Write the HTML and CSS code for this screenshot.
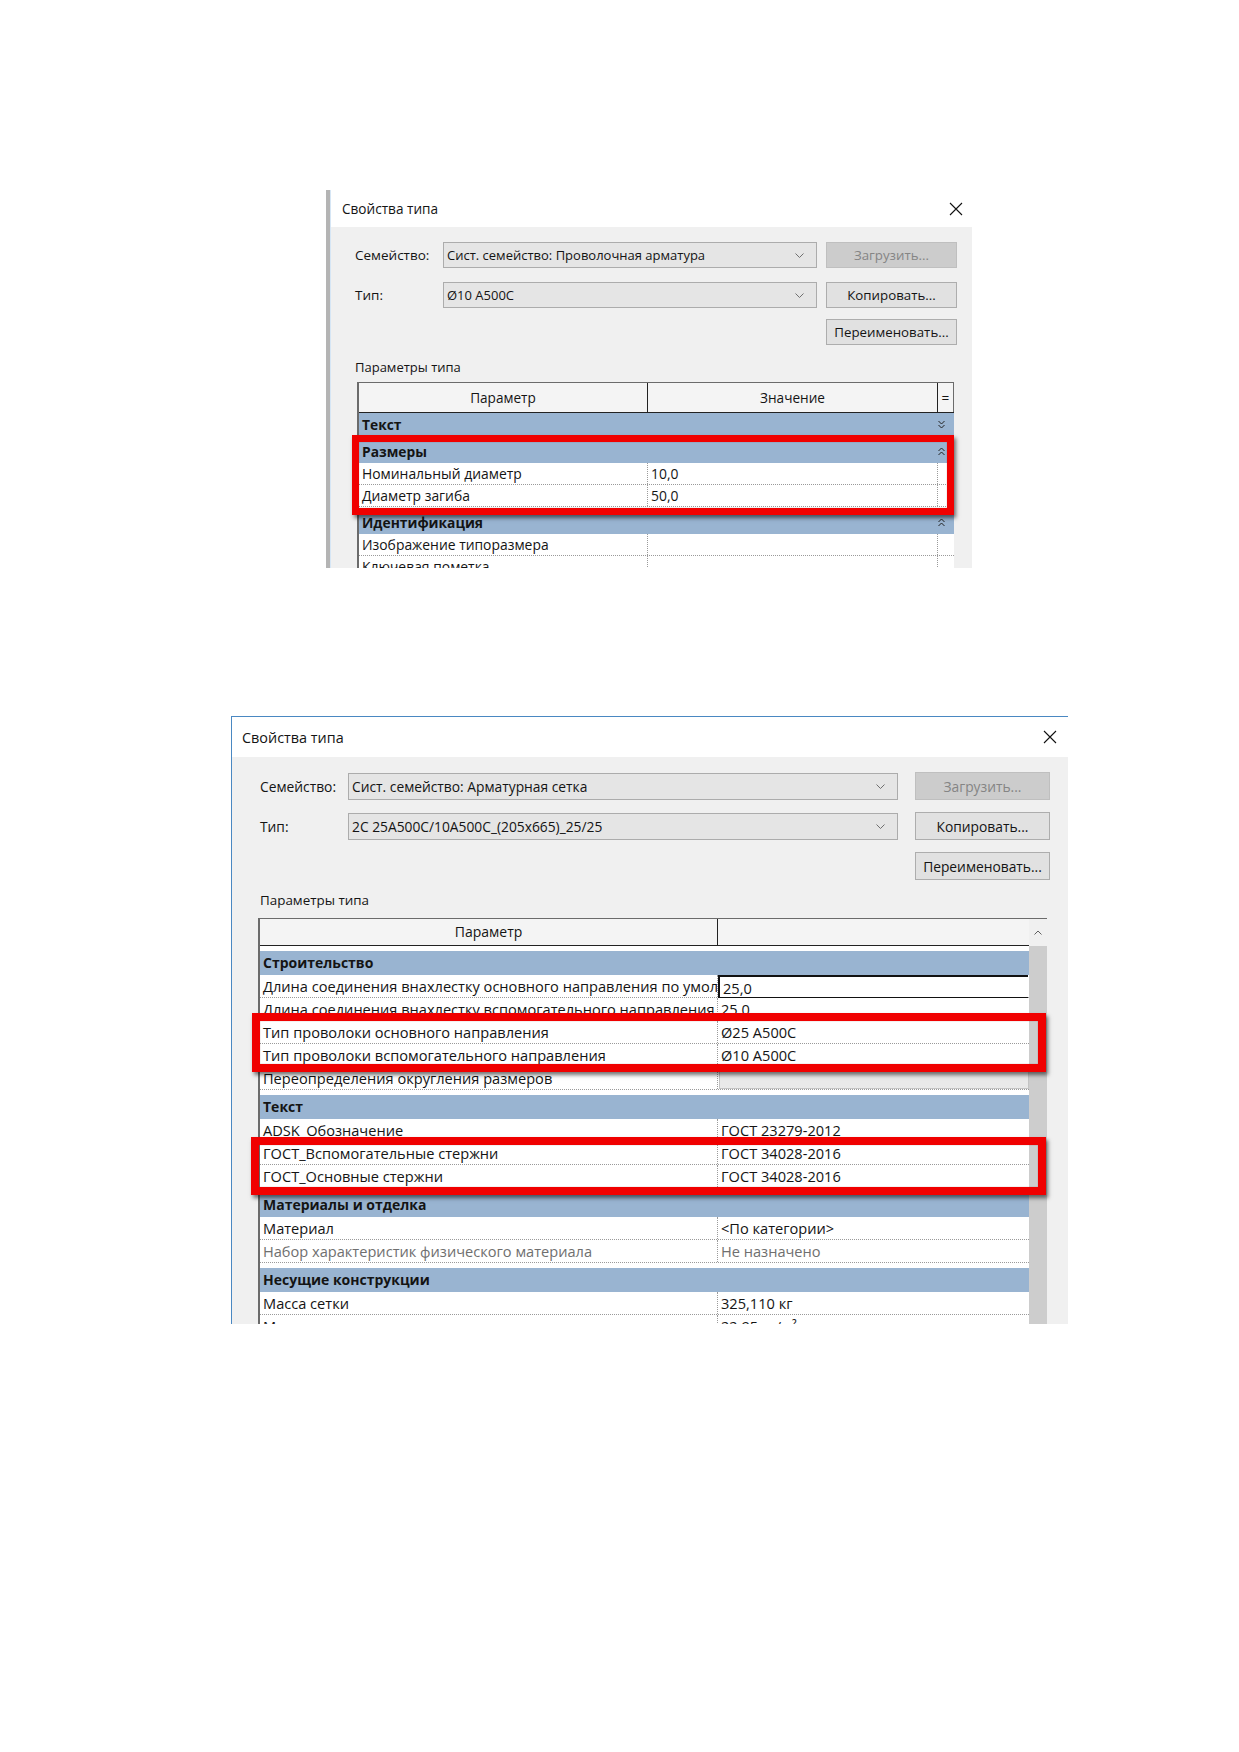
FILE: index.html
```html
<!DOCTYPE html>
<html lang="ru">
<head>
  <meta charset="UTF-8" />
  <title>Свойства типа</title>
  <link rel="stylesheet" href="styles.css">
</head>
<body>

  <!-- Окно 1: проволочная арматура -->
  <div class="dialog d1">
    <div class="window">
      <div class="titlebar">
        <span class="title">Свойства типа</span>
        <svg class="close" width="14" height="14" viewBox="0 0 14 14"><path d="M1 1L13 13M13 1L1 13" stroke="#111" stroke-width="1.1" fill="none"/></svg>
      </div>
      <div class="content">
        <div class="type-form">
          <span class="lbl">Семейство:</span>
          <div class="combo"><span>Сист. семейство: Проволочная арматура</span><svg width="9" height="5" viewBox="0 0 9 5"><path d="M0.5 0.5L4.5 4.5L8.5 0.5" stroke="#6f6f6f" fill="none"/></svg></div>
          <button class="btn disabled">Загрузить...</button>
          <span class="lbl">Тип:</span>
          <div class="combo"><span>Ø10 A500C</span><svg width="9" height="5" viewBox="0 0 9 5"><path d="M0.5 0.5L4.5 4.5L8.5 0.5" stroke="#6f6f6f" fill="none"/></svg></div>
          <button class="btn">Копировать...</button>
          <button class="btn col3">Переименовать...</button>
        </div>
        <div class="section-lbl">Параметры типа</div>

        <div class="grid">
          <div class="props">
            <div class="head">
              <div class="c-name">Параметр</div>
              <div class="c-val">Значение</div>
              <div class="c-eq">=</div>
            </div>
            <div class="group first">Текст
              <svg class="fold" width="7" height="9" viewBox="0 0 7 9"><path d="M0.5 1L3.5 4L6.5 1M0.5 5L3.5 8L6.5 5" stroke="#222" fill="none"/></svg>
            </div>
            <div class="group">Размеры
              <svg class="fold" width="7" height="9" viewBox="0 0 7 9"><path d="M0.5 4L3.5 1L6.5 4M0.5 8L3.5 5L6.5 8" stroke="#222" fill="none"/></svg>
            </div>
            <div class="row"><div class="c-name">Номинальный диаметр</div><div class="c-val">10,0</div><div class="c-eq"></div></div>
            <div class="row"><div class="c-name">Диаметр загиба</div><div class="c-val">50,0</div><div class="c-eq"></div></div>
            <div class="group">Идентификация
              <svg class="fold" width="7" height="9" viewBox="0 0 7 9"><path d="M0.5 4L3.5 1L6.5 4M0.5 8L3.5 5L6.5 8" stroke="#222" fill="none"/></svg>
            </div>
            <div class="row"><div class="c-name">Изображение типоразмера</div><div class="c-val"></div><div class="c-eq"></div></div>
            <div class="row"><div class="c-name">Ключевая пометка</div><div class="c-val"></div><div class="c-eq"></div></div>
          </div>
        </div>
      </div>
    </div>
    <div class="mark d1-mark"></div>
  </div>

  <!-- Окно 2: арматурная сетка -->
  <div class="dialog d2">
    <div class="window">
      <div class="titlebar">
        <span class="title">Свойства типа</span>
        <svg class="close" width="14" height="14" viewBox="0 0 14 14"><path d="M1 1L13 13M13 1L1 13" stroke="#111" stroke-width="1.1" fill="none"/></svg>
      </div>
      <div class="content">
        <div class="type-form">
          <span class="lbl">Семейство:</span>
          <div class="combo"><span>Сист. семейство: Арматурная сетка</span><svg width="9" height="5" viewBox="0 0 9 5"><path d="M0.5 0.5L4.5 4.5L8.5 0.5" stroke="#6f6f6f" fill="none"/></svg></div>
          <button class="btn disabled">Загрузить...</button>
          <span class="lbl">Тип:</span>
          <div class="combo"><span>2C 25A500C/10A500C_(205x665)_25/25</span><svg width="9" height="5" viewBox="0 0 9 5"><path d="M0.5 0.5L4.5 4.5L8.5 0.5" stroke="#6f6f6f" fill="none"/></svg></div>
          <button class="btn">Копировать...</button>
          <button class="btn col3">Переименовать...</button>
        </div>
        <div class="section-lbl">Параметры типа</div>

        <div class="grid">
          <div class="props">
            <div class="head">
              <div class="c-name">Параметр</div>
              <div class="c-val"></div>
            </div>
            <div class="group">Строительство</div>
            <div class="row"><div class="c-name">Длина соединения внахлестку основного направления по умолчанию</div><div class="c-val editing">25,0</div></div>
            <div class="row"><div class="c-name">Длина соединения внахлестку вспомогательного направления</div><div class="c-val">25,0</div></div>
            <div class="row"><div class="c-name">Тип проволоки основного направления</div><div class="c-val">Ø25 A500C</div></div>
            <div class="row"><div class="c-name">Тип проволоки вспомогательного направления</div><div class="c-val">Ø10 A500C</div></div>
            <div class="row"><div class="c-name">Переопределения округления размеров</div><div class="c-val field"></div></div>
            <div class="group">Текст</div>
            <div class="row"><div class="c-name">ADSK_Обозначение</div><div class="c-val">ГОСТ 23279-2012</div></div>
            <div class="row"><div class="c-name">ГОСТ_Вспомогательные стержни</div><div class="c-val">ГОСТ 34028-2016</div></div>
            <div class="row"><div class="c-name">ГОСТ_Основные стержни</div><div class="c-val">ГОСТ 34028-2016</div></div>
            <div class="group">Материалы и отделка</div>
            <div class="row"><div class="c-name">Материал</div><div class="c-val">&lt;По категории&gt;</div></div>
            <div class="row muted"><div class="c-name">Набор характеристик физического материала</div><div class="c-val">Не назначено</div></div>
            <div class="group">Несущие конструкции</div>
            <div class="row"><div class="c-name">Масса сетки</div><div class="c-val">325,110 кг</div></div>
            <div class="row"><div class="c-name">Масса сетки на единицу площади</div><div class="c-val">22,95 кг/м²</div></div>
          </div>
          <div class="vscroll">
            <div class="arrow"><svg width="8" height="5" viewBox="0 0 8 5"><path d="M0.5 4.5L4 1L7.5 4.5" stroke="#606060" fill="none"/></svg></div>
            <div class="thumb"></div>
          </div>
        </div>
      </div>
    </div>
    <div class="mark d2-mark-a"></div>
    <div class="mark d2-mark-b"></div>
  </div>

</body>
</html>
```

FILE: styles.css
```css
:root {
  --dlg: #f0f0f0;
  --group: #99b4d1;
  --ink: #141414;
  --muted: #6f6f6f;
  --frame: #6b6b6b;
  --dots: #9a9a9a;
  --mark: #f00000;
}

* {
  margin: 0;
  padding: 0;
  box-sizing: border-box;
}

body {
  background: #fff;
  font-family: "Open Sans", "Noto Sans", sans-serif;
  color: var(--ink);
  padding-top: 190px;
}

/* ---------- dialog frame ---------- */

.dialog {
  position: relative;
  overflow: hidden;
}

.window {
  height: 100%;
  display: flex;
  flex-direction: column;
}

.titlebar {
  display: flex;
  align-items: center;
  justify-content: space-between;
  background: #fff;
  flex-shrink: 0;
}

.content {
  flex: 1;
  background: var(--dlg);
}

.type-form {
  display: grid;
  align-items: end;
}

.lbl {
  white-space: nowrap;
}

.combo {
  display: flex;
  align-items: center;
  justify-content: space-between;
  background: #e5e5e5;
  border: 1px solid #acacac;
  padding: 0 12px 0 3px;
  white-space: nowrap;
}

.btn {
  font-family: inherit;
  color: var(--ink);
  background: #e1e1e1;
  border: 1px solid #adadad;
  white-space: nowrap;
}

.btn.disabled {
  background: #cccccc;
  border-color: #bfbfbf;
  color: #858585;
}

.btn.col3 {
  grid-column: 3;
}

/* ---------- property grid ---------- */

.grid {
  display: flex;
  background: #fff;
  border-top: 1px solid var(--frame);
  border-left: 2px solid var(--frame);
}

.props {
  flex: 1;
}

.head {
  display: flex;
  background: #f4f4f4;
  border-bottom: 1px solid #222;
}

.head .c-name {
  text-align: center;
  border-right: 1px solid #222;
}

.head .c-val {
  text-align: center;
}

.group {
  position: relative;
  background: var(--group);
  font-weight: 700;
  padding-left: 3px;
  white-space: nowrap;
}

.fold {
  position: absolute;
  right: 9px;
  top: 50%;
  margin-top: -5px;
}

.row {
  display: flex;
  border-bottom: 1px dotted var(--dots);
  white-space: nowrap;
}

.row .c-name {
  overflow: hidden;
  padding-left: 3px;
  border-right: 1px dotted var(--dots);
}

.row .c-val {
  padding-left: 3px;
  overflow: hidden;
}

.row.muted {
  color: var(--muted);
}

.c-val.editing {
  border: 1px solid #111;
  border-width: 2px 0 1px 2px;
  margin-bottom: -1px;
}

.c-val.field {
  background: #e9e9e9;
  border: 1px solid #c3c3c3;
  margin: 1px 0 0 1px;
}

.c-name, .c-val, .c-eq {
  flex-shrink: 0;
}

/* highlight frames drawn over the grid */
.mark {
  position: absolute;
  border: 7px solid var(--mark);
  box-shadow: 2px 3px 4px rgba(0, 0, 0, 0.55), inset 0 0 1px rgba(80, 0, 0, 0.6);
}

/* ---------- first dialog ---------- */

.d1 {
  margin-left: 326px;
  width: 646px;
  height: 378px;
  border-left: 4px solid #b4b4b4;
}

.d1 .window {
  border-left: 1px solid #d6e6f5;
}

.d1 .titlebar {
  height: 37px;
  padding: 0 9px 0 11px;
}

.d1 .title {
  font-size: 13.6px;
}

.d1 .content {
  padding: 0 0 0 24px;
}

.d1 .type-form {
  font-size: 13px;
  grid-template-columns: 79px 374px 131px;
  grid-template-rows: 41px 40px 37px;
  column-gap: 9px;
}

.d1 .lbl {
  font-size: 13.5px;
  line-height: 26px;
}

.d1 .combo, .d1 .btn {
  height: 26px;
  font-size: 13px;
}

.d1 .btn {
  font-size: 13.3px;
}

.d1 .section-lbl {
  font-size: 13px;
  line-height: 16px;
  margin-top: 14px;
}

.d1 .grid {
  margin: 7px 0 0 2px;
  width: 597px;
}

.d1 .head {
  height: 30px;
  line-height: 29px;
  font-size: 13.6px;
}

.d1 .c-name { width: 289px; }
.d1 .c-val { width: 290px; }
.d1 .c-eq { width: 16px; }

.d1 .head .c-val {
  border-right: 1px solid #222;
}

.d1 .head .c-eq {
  text-align: center;
  border-right: 1px solid var(--frame);
}

.d1 .row .c-val {
  border-right: 1px dotted var(--dots);
}

.d1 .group {
  height: 23px;
  line-height: 23px;
  font-size: 13.8px;
  margin-top: 4px;
}

.d1 .group.first {
  margin-top: 0;
}

.d1 .row {
  height: 22px;
  line-height: 21px;
  font-size: 13.9px;
}

.d1-mark {
  left: 22px;
  top: 245px;
  width: 602px;
  height: 80px;
}

/* ---------- second dialog ---------- */

.d2 {
  margin: 148px 0 0 231px;
  width: 837px;
  height: 608px;
  border-top: 1px solid #4a88c2;
  border-left: 1px solid #4a88c2;
}

.d2 .titlebar {
  height: 40px;
  padding: 0 11px 0 10px;
}

.d2 .title {
  font-size: 14.4px;
}

.d2 .content {
  padding: 0 0 0 28px;
}

.d2 .type-form {
  font-size: 13.8px;
  grid-template-columns: 71px 550px 135px;
  grid-template-rows: 43px 40px 40px;
  column-gap: 17px;
}

.d2 .lbl {
  font-size: 13.8px;
  line-height: 27px;
}

.d2 .combo {
  height: 27px;
  font-size: 13.8px;
}

.d2 .btn {
  height: 28px;
  font-size: 13.8px;
}

.d2 .section-lbl {
  font-size: 13.4px;
  line-height: 16px;
  margin-top: 12px;
}

.d2 .grid {
  margin: 10px 0 0 -2px;
  width: 789px;
}

.d2 .head {
  height: 27px;
  line-height: 26px;
  font-size: 14px;
}

.d2 .c-name { width: 458px; }
.d2 .c-val { width: 310px; }

.d2 .group {
  height: 24px;
  line-height: 24px;
  font-size: 14px;
  margin-top: 5px;
}

.d2 .row {
  height: 23px;
  line-height: 22px;
  font-size: 14.6px;
}

.vscroll {
  width: 19px;
  display: flex;
  flex-direction: column;
}

.vscroll .arrow {
  height: 27px;
  display: flex;
  align-items: center;
  justify-content: center;
  background: #f0f0f0;
}

.vscroll .thumb {
  flex: 1;
  background: #cdcdcd;
}

.d2 .mark {
  border-width: 8px;
}

.d2-mark-a {
  left: 20px;
  top: 296px;
  width: 794px;
  height: 59px;
}

.d2-mark-b {
  left: 19px;
  top: 420px;
  width: 795px;
  height: 58px;
}
```
